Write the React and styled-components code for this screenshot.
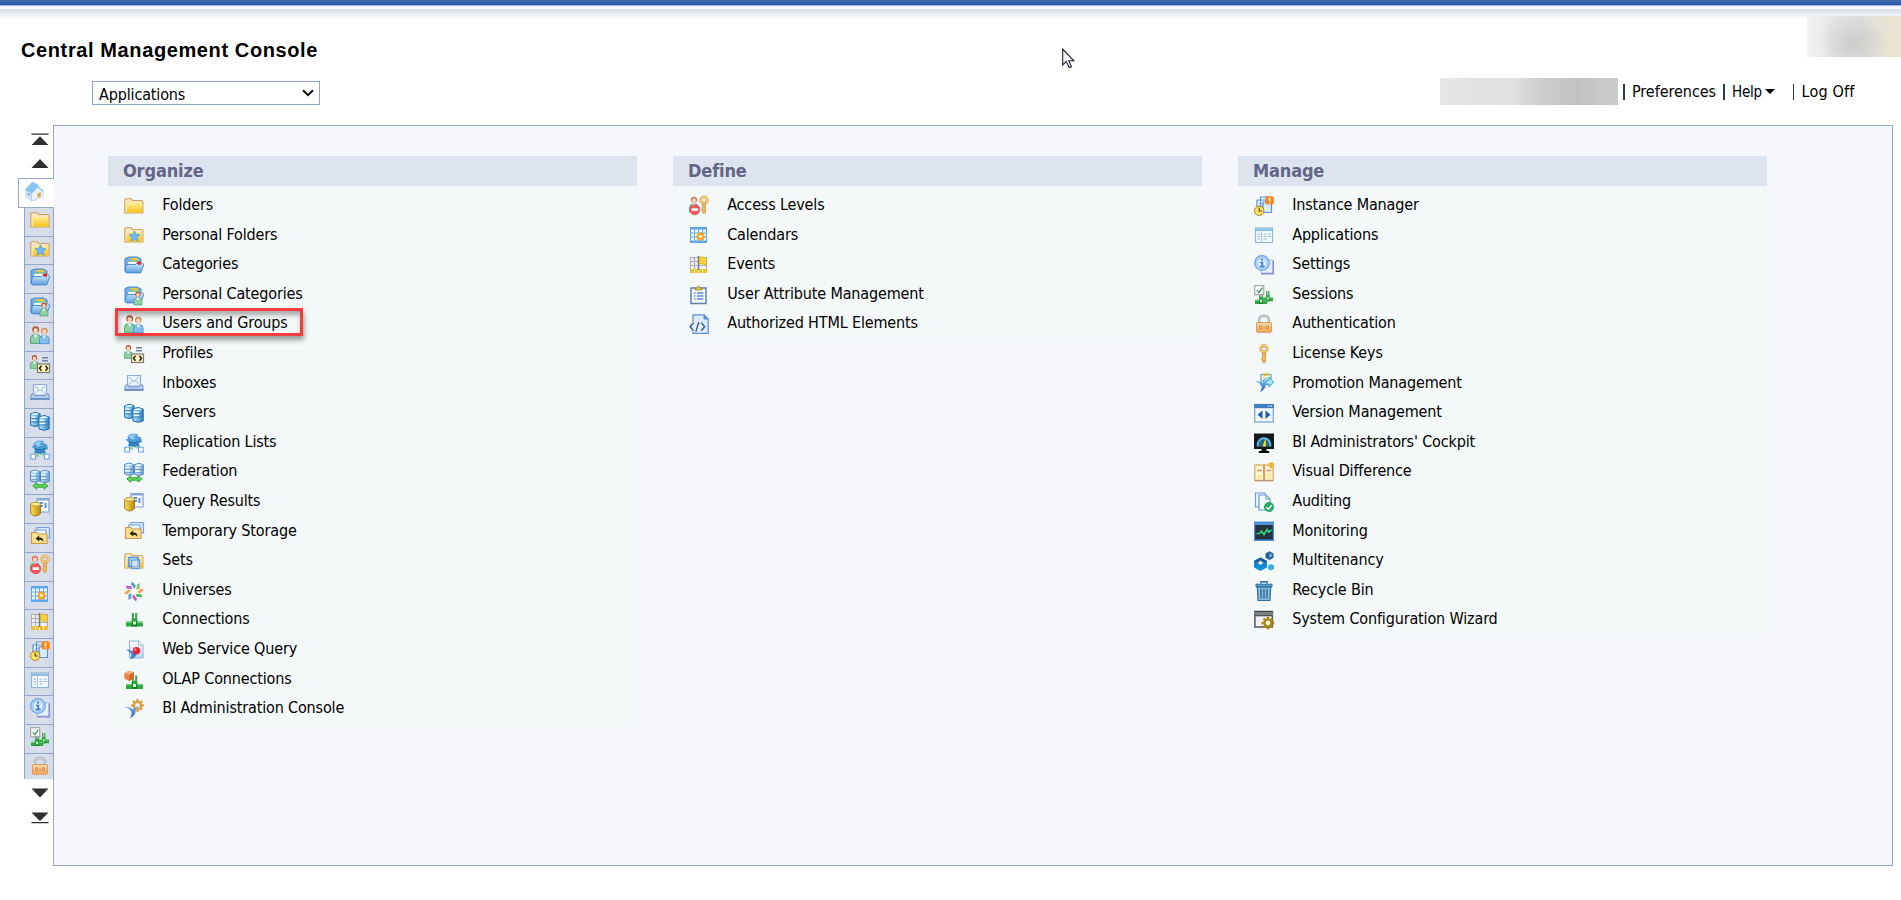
import React from 'react';
import styled, { createGlobalStyle } from 'styled-components';

const GlobalStyle = createGlobalStyle`
  * { box-sizing: border-box; }
  body { margin: 0; background: #fff; overflow: hidden; }
`;

const UI_FONT = '"DejaVu Sans Condensed", "DejaVu Sans", Tahoma, sans-serif';

/* ---------- icons ---------- */

const SharedDefs = styled.svg`
  position: absolute;
  width: 0;
  height: 0;
`;

const Grad = ({ id, from, to, flat }) => (
  <linearGradient id={id} x1="0" y1="0" x2={flat ? 1 : 0} y2={flat ? 0 : 1}>
    <stop offset="0" stopColor={from} />
    <stop offset="1" stopColor={to} />
  </linearGradient>
);

const Gradients = () => (
  <SharedDefs aria-hidden="true">
    <defs>
      <Grad id="gYellow" from="#ffed92" to="#f7c21a" />
      <Grad id="gBlue" from="#d3eafc" to="#5a9fe0" />
      <Grad id="gServer" from="#b5e2f8" to="#3289c6" flat />
      <Grad id="gServerPale" from="#cfe8fa" to="#74a9da" flat />
      <Grad id="gGold" from="#ffe05a" to="#b98a10" flat />
      <Grad id="gPage" from="#ffffff" to="#bcd7f6" />
      <Grad id="gLock" from="#ffdfae" to="#f2a55a" />
      <Grad id="gSwoosh" from="#7dbcf3" to="#1a57cc" />
      <Grad id="gHex" from="#1b6fb4" to="#0a9be0" />
    </defs>
  </SharedDefs>
);

const Bust = ({ x = 0, y = 0, s = 1, body = '#8fd0a4', edge = '#4aa56c', hair = '#b4563a' }) => (
  <g transform={`translate(${x} ${y}) scale(${s})`}>
    <path d="M.5 17v-4.5Q.5 9 4 8.6h2.6Q10.300 9 10.300 12.500V17z" fill={body} stroke={edge} strokeWidth=".9" />
    <path d="M3.600 8.600L5.300 12l1.800-3.400z" fill="#fff" />
    <circle cx="5.400" cy="4" r="3.300" fill={hair} />
    <ellipse cx="5.400" cy="4.900" rx="2.100" ry="2.500" fill="#fbd8bd" />
  </g>
);

const Cylinder = ({ x = 0, y = 0, w = 9, h = 14, fill = 'url(#gServer)', edge = '#1f6ca8' }) => (
  <g transform={`translate(${x} ${y})`} stroke={edge} strokeWidth="1">
    <path d={`M0 2V${h - 1.500}Q${w / 2} ${h + 1} ${w} ${h - 1.500}V2Q${w / 2}-1 0 2z`} fill={fill} />
    <path d={`M.8 2.200Q${w / 2} 4.200 ${w - 0.8} 2.200Q${w / 2}.2.8 2.200z`} fill="#dff3fd" stroke="none" />
    <path d={`M.5 5.300h${w * 0.55}M.5 8.500h${w * 0.55}`} fill="none" stroke="#f2fbff" strokeWidth="1.300" />
    <path d={`M.5 6.700h${w - 1}M.5 9.900h${w - 1}`} fill="none" strokeWidth=".7" />
  </g>
);

const FolderShape = () => (
  <>
    <path d="M.8 17V4l1-1.200h5.600l1.400 1.700h9.300l.8.9V17z" fill="#f8e6bf" stroke="#cf9f5c" strokeWidth="1.100" />
    <rect x="3" y="7" width="15.300" height="9.600" fill="url(#gYellow)" />
  </>
);

const Cog = ({ cx, cy, r, color, hole = '#f5f8f9' }) => (
  <g transform={`translate(${cx} ${cy})`}>
    {[0, 45, 90, 135].map((a) => (
      <rect key={a} x={-r * 0.2} y={-r} width={r * 0.4} height={r * 2} fill={color} transform={`rotate(${a})`} />
    ))}
    <circle r={r * 0.7} fill={color} />
    <circle r={r * 0.38} fill={hole} />
  </g>
);

const Swoosh = () => (
  <path d="M.5 7.500q6 .5 8.500 3.300Q10.500 7.500 15 6.800q-3.200 2.500-3.500 6-.4 4-5.500 6.400 3-5.200.6-7.700Q4.500 9 .5 7.500z" fill="url(#gSwoosh)" />
);

const GreenPlug = ({ x = 0, y = 0, s = 1 }) => (
  <g transform={`translate(${x} ${y}) scale(${s})`}>
    <path d="M6.800 0v7M10.200 0v7" stroke="#37a34a" strokeWidth="2" />
    <path d="M0 8.500h5.200l1-3.200h4.600l1 3.200H17v5H0z" fill="#2fa83f" />
    <path d="M0 9.300h17" stroke="#8fe08f" strokeWidth=".9" />
    <path d="M6 8.500h5l.6 5H5.400z" fill="#1c7f2e" />
    <rect x="7" y="8.500" width="3" height="3" fill="#d7f5d5" />
  </g>
);

const CategoryShape = () => (
  <>
    <path d="M1 16V3.500L5 2h8l4 2v3z" fill="#6fb0e6" stroke="#4a86c6" />
    <path d="M4 3.800l8-1 3 1.800-2 1.600z" fill="#f5c93a" />
    <path d="M6 5.600l8-.4 3 2H5z" fill="#7fc77e" />
    <path d="M4 7l12-.6.600 4H4z" fill="#f4f9ff" />
    <path d="M1 16.800L2.500 9.500h9l1.500-1.600h5.500l1.200 2-3 8H3z" fill="url(#gBlue)" stroke="#3f85cf" strokeWidth=".9" />
  </>
);

const Key = ({ x = 0, y = 0 }) => (
  <g transform={`translate(${x} ${y})`}>
    <path d="M3.500 7h3v11l-1.500 1.300L3.500 18v-2l-1.500-1 1.500-1.300z" fill="#eeb85c" stroke="#c88a34" strokeWidth=".7" />
    <circle cx="5" cy="4.800" r="3.300" fill="none" stroke="#d89a40" strokeWidth="2.800" />
    <circle cx="5" cy="4.600" r="3.300" fill="none" stroke="#f9d389" strokeWidth="1.400" />
  </g>
);

const GLYPHS = {
  home: (
    <>
      <path d="M1 9l6 3v8l-6-4.500z" fill="#d3e6f8" stroke="#9dc1e6" strokeWidth=".7" />
      <path d="M6.500 12l6-6 5.500 4v6L8.500 19.800l-2-1z" fill="#e9f3fe" stroke="#a3c5ea" strokeWidth=".7" />
      <path d="M.5 8.500L7.500 1 13.500 4.500 7 12z" fill="#8ac4f5" stroke="#7bb5ec" strokeWidth=".7" />
      <path d="M12.500 4.500l6 5-.5 1.500-6-5z" fill="#9cc8f2" />
      <path d="M12.500 12.500l3.300-1.600v4.500l-3.300 1.600z" fill="#e3a454" />
      <rect x="2.500" y="12" width="2.500" height="2.500" fill="#8fbde8" />
    </>
  ),
  folder: <FolderShape />,
  personalFolder: (
    <>
      <FolderShape />
      <path d="M10.500 5.800l1.700 3.500 3.800.5-2.800 2.600.7 3.800-3.400-1.900-3.400 1.900.7-3.800L5 9.800l3.800-.5z" fill="#6cbcf5" stroke="#4a9ade" strokeWidth=".7" />
    </>
  ),
  category: (
    <>
      <CategoryShape />
      <path d="M12.500 6.500h4.500v3.200h-3z" fill="#e0262b" />
    </>
  ),
  personalCategory: (
    <>
      <CategoryShape />
      <Bust x={9.500} y={6} s={0.82} />
    </>
  ),
  users: (
    <>
      <Bust x={0} y={0.500} s={1.050} />
      <Bust x={9} y={2} s={0.980} body="#86bdf0" edge="#4a90d8" hair="#d98a50" />
    </>
  ),
  profile: (
    <>
      <Bust x={0} y={0.500} s={0.820} />
      <path d="M12 3.800h6M12 6.800h6" stroke="#6f7fae" strokeWidth="1.500" />
      <rect x="7.500" y="10" width="12" height="8.500" fill="#fff3b8" stroke="#7b7b72" strokeWidth="1.200" />
      <path d="M11.500 11.800l-2 2.500 2 2.500M15.500 11.800l2 2.500-2 2.500" fill="none" stroke="#222" strokeWidth="1.500" />
    </>
  ),
  inbox: (
    <>
      <path d="M3.500 2.500h13v10.500h-13z" fill="#eef5fd" stroke="#8aaede" strokeWidth="1.200" />
      <path d="M5 4l5 4.500L15 4M5 11.500L8.500 8M15 11.500L11.500 8" fill="none" stroke="#8fb2e0" strokeWidth="1" />
      <path d="M.6 17.500L1.500 12h2.300l1 1.800h10.400l1-1.800h2.300l.9 5.500z" fill="#b6d1f2" stroke="#7493c8" strokeWidth="1" />
      <path d="M1 16.500h18" stroke="#6f90c8" strokeWidth="1.200" />
    </>
  ),
  servers: (
    <>
      <Cylinder x={0.600} y={0.800} w={9.500} h={15} />
      <Cylinder x={9} y={4} w={10.200} h={15.500} />
    </>
  ),
  replication: (
    <>
      <path d="M1.500 6.500L4 5.500 3.500 3 8 .5l6 .5-1 2 4 1.500 1 4.500-3 1 1 4-5 .5-3-1.500-3 1-1-2 1-2.500z" fill="#4b9bd5" />
      <path d="M4 3.500L8.500 1l4 1-3.500 2.500 5 .5-6 1.500z" fill="#8fcaf0" />
      <path d="M5 9q6 2.500 11-1M6 12q4 1.500 8-.5" stroke="#1f6fb2" strokeWidth="1.400" fill="none" />
      <path d="M5.500 16.500l2.500-4 1.500 4zM11 12.500l1.500 3.500 2-3" fill="#7ccf86" />
      <path d="M.8 14.200h4.800v4.800H.8zM14.400 14.200h4.800v4.800h-4.800z" fill="#fff" stroke="#69a4e8" strokeWidth="1.100" />
    </>
  ),
  federation: (
    <>
      <Cylinder x={0.600} y={0.500} w={9} h={13} fill="url(#gServerPale)" edge="#4f8ac2" />
      <Cylinder x={10.500} y={0.800} w={8.800} h={13} fill="url(#gServerPale)" edge="#4f8ac2" />
      <path d="M2.800 17l4-3.300v2H14v-2l4 3.300-4 3.200v-2H6.800v2z" fill="#67d65f" stroke="#24a12e" strokeWidth=".9" />
    </>
  ),
  query: (
    <>
      <path d="M7 1.500h12v13.500H7z" fill="#f6faff" stroke="#7d9fd4" strokeWidth="1.200" />
      <path d="M7 2.500h12" stroke="#86a9dc" strokeWidth="2" />
      <path d="M10 6h3M10 9h3M15.500 6v5" stroke="#5d8fd8" strokeWidth="2" />
      <path d="M.7 7.500v9Q5.500 21.500 10.500 16.500v-9z" fill="url(#gGold)" stroke="#9c7410" strokeWidth=".9" />
      <ellipse cx="5.600" cy="7.300" rx="4.900" ry="2" fill="#fbe88a" stroke="#b08618" strokeWidth=".8" />
    </>
  ),
  temporary: (
    <>
      <path d="M7 1.500h11.500l1 1V12H7z" fill="#dbeafc" stroke="#6fa0e0" strokeWidth="1.200" />
      <path d="M5 4h11v6H5z" fill="#f2f8ff" stroke="#6fa0e0" strokeWidth="1.200" />
      <path d="M1.500 17.500V6.500h5.500l1 1.500h9v9.500z" fill="#fae08a" stroke="#c9994e" strokeWidth="1.100" />
      <path d="M5.500 12.500l3.700-3v2q4.500 0 4.300 4.300-1-2-4.300-2v1.800z" fill="#2e2612" />
    </>
  ),
  sets: (
    <>
      <FolderShape />
      <rect x="5" y="6.500" width="9" height="9" fill="#dcebff" fillOpacity=".7" stroke="#3f8df0" strokeWidth="1.500" />
      <rect x="7.500" y="9" width="8" height="8.500" fill="#cfe4ff" fillOpacity=".6" stroke="#5a9df2" strokeWidth="1.300" />
    </>
  ),
  universe: (
    <g transform="translate(10 10.500)">
      {['#4f9fd8', '#8fbf5a', '#f5a54a', '#4fb85a', '#c759c2', '#5e9fd4', '#f2a83c', '#c45fc6'].map((c, i) => (
        <path key={i} d="M.8-2.800L-3-7-2-10 1.800-6z" fill={c} transform={`rotate(${i * 45})`} />
      ))}
    </g>
  ),
  connection: <GreenPlug x={2} y={3} />,
  webQuery: (
    <>
      <path d="M5.500 1h9L19 5v13H5.500z" fill="url(#gPage)" stroke="#94aed4" />
      <path d="M14.500 1v4H19" fill="#fff" stroke="#94aed4" />
      <path d="M2 9.500q5 0 7 2.500 3 0 4 1-1 5-7 6.500 2.500-4 1-6.500-2-2-5-3.500z" fill="#3b7fda" />
      <circle cx="12.500" cy="10.800" r="3.800" fill="#e0283a" />
      <circle cx="11.300" cy="9.600" r="1.100" fill="#ff9aa0" />
    </>
  ),
  olap: (
    <>
      <GreenPlug x={2} y={5.500} />
      <path d="M.3 3.200L5 .7l5 1.500v6L5.200 11 .3 8.500z" fill="#ec8446" />
      <path d="M.3 3.200L5 .7l5 1.500L5.200 4.800z" fill="#f9b37e" />
      <path d="M5.200 4.800L10 2.200v6L5.200 11z" fill="#d8662a" />
    </>
  ),
  biAdmin: (
    <>
      <Cog cx={13.500} cy={6.500} r={6.300} color="#dd9a38" />
      <Swoosh />
    </>
  ),
  access: (
    <>
      <Bust x={0} y={0} s={0.930} hair="#e06a50" />
      <g transform="translate(10 -.5) scale(1 .95)"><Key /></g>
      <circle cx="5.800" cy="13.800" r="5" fill="#f0585c" stroke="#dc4448" strokeWidth=".7" />
      <rect x="2.600" y="12.300" width="6.500" height="2.600" fill="#fff" />
    </>
  ),
  calendar: (
    <>
      <rect x="1.500" y="2.500" width="16" height="15" fill="#eaf5ff" stroke="#58a3ea" />
      <path d="M1.500 3.500h16M1.500 16.500h16" stroke="#5aa8f0" strokeWidth="2" />
      <path d="M1 8h17M1 12h17M5.500 3v15M9.500 3v15M13.500 3v15" stroke="#69aeee" strokeWidth="1" />
      <Cog cx={11.500} cy={11.500} r={4.500} color="#f6a01c" hole="#fff0b0" />
    </>
  ),
  events: (
    <>
      <rect x="1.500" y="2.500" width="16" height="15" fill="#f0f1f3" stroke="#a9adb5" />
      <path d="M1 6.500h17M1 10.500h17M5.500 2v12" stroke="#a9adb5" strokeWidth="1.200" />
      <rect x="1.500" y="14" width="16.500" height="4" fill="#f3c02c" />
      <path d="M5.500 14v4M9.500 14v4M13.500 14v4" stroke="#fff4c4" strokeWidth="1" />
      <path d="M9.500 1v14" stroke="#7b7f87" strokeWidth="1.600" />
      <path d="M10.500 2q4-1 7 1.500v7q-3.500-2.500-7-1.500z" fill="#f8cf3c" stroke="#d8aa2a" strokeWidth=".7" />
    </>
  ),
  attribute: (
    <>
      <rect x="2" y="3" width="15" height="15.500" fill="#f4f8fe" stroke="#6080b8" strokeWidth="1.500" />
      <path d="M5 8h1.500M5 11h1.500M5 14h1.500M8 8h6.500M8 11h6.500M8 14h6.500" stroke="#5c87d2" strokeWidth="1.400" />
      <path d="M6 5h7V3.500l-2-.5Q9.500-.8 8 3l-2 .500z" fill="#e9c53c" stroke="#9b8431" strokeWidth=".8" />
    </>
  ),
  html: (
    <>
      <path d="M4 .8h11l4.200 4.200v14.300H4z" fill="#dcecfb" stroke="#5b8fd0" strokeWidth="1.200" />
      <path d="M15 .8V5h4.200" fill="#5b8fd0" stroke="#5b8fd0" />
      <path d="M0 8h14v9.500H0z" fill="#e9f2fb" />
      <path d="M4.500 8.800L1.200 12.800l3.300 4M12.300 8.800l3.300 4-3.300 4M9.800 8l-3 9.800" fill="none" stroke="#3a5f94" strokeWidth="1.500" />
    </>
  ),
  instance: (
    <>
      <path d="M6.500 1h9v12h-9zM3 4h9v12H3z" fill="#edf5ff" stroke="#5c92dc" strokeWidth="1.200" />
      <path d="M9 6h8.500v10.500H9z" fill="#d9eaff" stroke="#5c92dc" strokeWidth="1.200" />
      <path d="M5 7.500h5M5 10h5" stroke="#7fabe6" />
      <circle cx="5.200" cy="14.800" r="4.700" fill="#ffdf66" stroke="#a9861e" />
      <path d="M5.200 11.800v3.200h2.800" fill="none" stroke="#5a4a1a" strokeWidth="1.200" />
      <rect x="11.500" y=".3" width="8.300" height="8.300" rx="2" fill="#ff8410" />
      <path d="M15.600 1.600v3.600M15.600 6.200v1.400" stroke="#fff" strokeWidth="1.600" />
    </>
  ),
  applications: (
    <>
      <rect x="1.500" y="3" width="17" height="14.500" fill="#f4fafe" stroke="#8fb6d4" strokeWidth="1.200" />
      <path d="M2 4.800h16" stroke="#8fc0e2" strokeWidth="2.600" />
      <path d="M7.500 6.500v11" stroke="#9ec3dd" />
      <path d="M3.500 9h2.600M3.500 11.500h2.600M3.500 14h2.600M9.500 9h3M13.800 9h3M9.500 11.500h3M13.800 11.500h3M9.500 14h3" stroke="#8fb9d6" strokeWidth="1.200" />
    </>
  ),
  settings: (
    <>
      <path d="M7 5h12v13H7z" fill="#e6effb" stroke="#b0bfdc" />
      <path d="M19.300 5.500v13.200H7" fill="none" stroke="#8e8fc4" strokeWidth="1.500" />
      <circle cx="8" cy="8" r="7.300" fill="#b9d8fa" stroke="#6ca6e8" strokeWidth="1.300" />
      <circle cx="8" cy="8" r="5" fill="#dcebfd" stroke="#8fbcf0" strokeWidth=".8" />
      <path d="M8 3.800v2M6 7.500h2.300v4M5.800 11.500h4.700" fill="none" stroke="#3a7bd0" strokeWidth="1.700" />
    </>
  ),
  sessions: (
    <>
      <g transform="translate(8.500 6) scale(.62 .75)"><GreenPlug /></g>
      <g transform="translate(1 7.500) scale(.72 .86)"><GreenPlug /></g>
      <rect x=".7" y=".7" width="9" height="9" fill="#fff" stroke="#a2a6a8" strokeWidth="1.200" />
      <path d="M2.800 5.300l2.200 2.400 3.200-5" fill="none" stroke="#3fa25a" strokeWidth="1.400" />
    </>
  ),
  auth: (
    <>
      <path d="M5 9.500V6.300Q5.300 2 10 1.800q4.700.2 5 4.500v3.200" fill="none" stroke="#a9adb2" strokeWidth="2.400" />
      <path d="M5 9.500V6.300Q5.300 2 10 1.800q4.700.2 5 4.500v3.200" fill="none" stroke="#e4e7ea" strokeWidth=".8" />
      <rect x="2.500" y="8.500" width="15" height="9.800" rx=".8" fill="url(#gLock)" stroke="#dc9a5c" />
      <path d="M5.500 11.800h2v3h-2zM12.500 11.800h2v3h-2zM10 11.500v3.800" fill="none" stroke="#d58c4a" strokeWidth="1" />
    </>
  ),
  license: <Key x={5} />,
  promotion: (
    <>
      <rect x="7" y="1.500" width="10" height="10" fill="#fdf6dc" stroke="#59a9c4" strokeWidth="1.200" />
      <rect x="9.800" y=".3" width="4.400" height="2.600" fill="#e3b33c" />
      <path d="M9 5h6" stroke="#8cc4b4" />
      <path d="M9 7h6V4l4.600 5-4.600 5v-3H9z" fill="#a6e9f2" stroke="#35a7c4" />
      <Swoosh />
    </>
  ),
  version: (
    <>
      <rect x=".7" y="1.500" width="18.600" height="17.500" fill="#f3f8fe" stroke="#7ca7d8" strokeWidth="1.300" />
      <rect x=".2" y="1" width="19.600" height="4.200" fill="#3f7ec2" />
      <path d="M14 3h1.500M16.500 3H18" stroke="#fff" strokeWidth="1.200" />
      <path d="M8.500 7.500v8.500l-5-4.200zM11.500 7.500v8.500l5-4.200z" fill="#1e5bb0" />
    </>
  ),
  cockpit: (
    <>
      <rect x="0" y=".5" width="20" height="15.500" fill="#15181c" />
      <rect x="7.500" y="16" width="5" height="2.500" fill="#111" />
      <rect x="4.800" y="18" width="10.400" height="2" fill="#000" />
      <path d="M4 13.500a6.300 6.300 0 1 1 12 0" fill="#2b6584" stroke="#54b9e6" strokeWidth="2" />
      <path d="M8.500 13.500L11.500 5l.5 8.500z" fill="#f1d53b" />
    </>
  ),
  difference: (
    <>
      <path d="M.8 3h9v15.500h-9zM10.500 3h8.700v15.500h-8.700z" fill="#fff5cf" stroke="#dfb573" strokeWidth="1.400" />
      <path d="M10 2.500v16.500M1 18.600h18" stroke="#b9967a" strokeWidth="1.300" />
      <path d="M3 8.500h5M12.500 8.500H17" stroke="#e58a7a" strokeWidth="1.500" />
      <path d="M3 13h5v4H3zM12.500 11H17v6h-4.500z" fill="#fbe8a8" />
      <path d="M15 .5h4.500V5L17 6.500 14.500 4z" fill="#f4b22a" />
    </>
  ),
  auditing: (
    <>
      <path d="M1.500 1h9.500v14H1.500z" fill="#e8f2fd" stroke="#6a9bd8" strokeWidth="1.100" />
      <path d="M5 3h7l4 4v11H5z" fill="#f4f9ff" stroke="#6a9bd8" strokeWidth="1.200" />
      <path d="M12 3v4h4" fill="none" stroke="#6a9bd8" strokeWidth="1.100" />
      <circle cx="15" cy="15" r="5" fill="#26a869" />
      <path d="M12.400 15.200l2 2 3.300-4" fill="none" stroke="#fff" strokeWidth="1.500" />
    </>
  ),
  monitoring: (
    <>
      <rect x="0" y=".5" width="20" height="19.500" fill="#4a90d9" />
      <rect x="1.200" y="4" width="17.600" height="14.500" fill="#26323d" />
      <path d="M2.500 12.500l3 0 2-2.500 2.500 3.500 3-5 1.800 2.500L17.500 9" fill="none" stroke="#2fd783" strokeWidth="1.600" />
    </>
  ),
  multitenancy: (
    <>
      <path d="M6.500 6.500l6.500 3.500v6.500L6.500 20 0 16.500V10z" fill="url(#gHex)" />
      <path d="M6.500 6.500l6.500 3.500-6.500 3.500L0 10z" fill="#1a5c96" />
      <path d="M6.500 9.500l3 2.500-3 2-3-2z" fill="#dff0fb" />
      <path d="M15.500.3l4 2.200v4.300l-4 2.200-4-2.200V2.500z" fill="#1e5f9c" />
      <path d="M15.500 2l2.300 1.500v2l-2.300 1.200z" fill="#7eb6dc" />
      <path d="M17 13l3 1.600v3.300l-3 1.700-3-1.700v-3.300z" fill="#3aaee6" />
    </>
  ),
  recycle: (
    <>
      <path d="M7 2.500V.8h6v1.700" fill="none" stroke="#2f6f9c" strokeWidth="1.500" />
      <path d="M2 3.200h16v2.800H2z" fill="#5b9cc6" stroke="#2f6f9c" />
      <path d="M3.300 6.200h13.400l-.7 13.300H4z" fill="#86b9dc" stroke="#2f6f9c" strokeWidth="1.200" />
      <path d="M7 8v9.800M10 8v9.800M13 8v9.800" stroke="#2f6f9c" strokeWidth="1.400" />
    </>
  ),
  wizard: (
    <>
      <rect x=".9" y="1.500" width="17.500" height="15.500" fill="#f0f2f3" stroke="#55585b" strokeWidth="1.500" />
      <rect x=".5" y="1" width="18.400" height="4.800" fill="#7c7f82" />
      <path d="M1 5.800h17.500M1 1.500h17.500" stroke="#3c3e40" strokeWidth="1.100" />
      <Cog cx={14} cy={13} r={6.300} color="#a8861a" hole="#f6efd0" />
    </>
  ),
};

const IconSvg = styled.svg`
  display: block;
  flex: none;
  width: 20px;
  height: 20px;
  overflow: visible;
`;

const Icon = ({ name }) => <IconSvg viewBox="0 0 20 20">{GLYPHS[name]}</IconSvg>;

/* ---------- page frame ---------- */

const Page = styled.div`
  position: relative;
  display: flex;
  flex-direction: column;
  width: 1901px;
  height: 900px;
  font: 16px/20px ${UI_FONT};
  letter-spacing: -0.15px;
  color: #000;
  background: #fff;
`;

const TopStripe = styled.div`
  flex: none;
  height: 20px;
  background: linear-gradient(
    #45699d 0 1px, #3a66a8 1px 2px, #2f5fb0 2px 4px, #2c56a3 4px 5px,
    #a9b6d8 5px 6px, #eef1fa 6px 7px, #fbfcff 7px 9px,
    #dcdfea 9px, #e2e5f0 12px, #f4f5fa 16px, #ffffff 20px
  );
`;

const Header = styled.header`
  display: flex;
  justify-content: space-between;
  height: 105px;
`;

const HeaderLeft = styled.div`
  display: flex;
  flex-direction: column;
  padding: 18px 0 0 21px;
`;

const Title = styled.h1`
  margin: 0;
  font: bold 20px/24px "Liberation Sans", Arial, sans-serif;
  letter-spacing: 0.61px;
`;

const ModuleSelect = styled.div`
  display: flex;
  align-items: center;
  justify-content: space-between;
  width: 228px;
  height: 24px;
  margin: 19px 0 0 71px;
  padding: 3px 5px 0 6px;
  border: 1px solid #8ea3c6;
`;

const Chevron = styled.svg`
  width: 12px;
  height: 8px;
  margin-top: -3px;
`;

const HeaderRight = styled.div`
  display: flex;
  flex-direction: column;
  align-items: flex-end;
`;

const LogoBlur = styled.div`
  width: 94px;
  height: 41px;
  margin-top: -4px;
  background:
    radial-gradient(ellipse 34px 30px at 50% 66%, rgba(200, 199, 198, 0.8), rgba(205, 204, 202, 0) 100%),
    linear-gradient(90deg, #f3f3f3 0, #e4e4e3 28%, #dfdfdd 55%, #e6e2d8 78%, #ece3cd 100%);
`;

const SessionBar = styled.nav`
  display: flex;
  align-items: center;
  height: 27px;
  margin: 21px 46px 0 0;
`;

const NameBlur = styled.div`
  width: 178px;
  height: 27px;
  margin-right: 5px;
  background: linear-gradient(90deg, #e7e7e7, #e0e0e1 22%, #e2e2e3 40%, #cfcdce 55%, #c3c2c2 78%, #cccccd 100%);
`;

const Divider = styled.span`
  width: 1.500px;
  height: 16px;
  background: #2a3b58;
`;

const SessionLink = styled.span`
  width: ${(p) => p.$width}px;
  padding-left: 7.500px;
  font-size: ${(p) => p.$size || 16}px;
  letter-spacing: ${(p) => p.$tracking || 0}px;
  white-space: nowrap;
`;

const Caret = styled.span`
  width: 0;
  height: 0;
  margin-right: 17.500px;
  border: 5px solid transparent;
  border-top: 5px solid #000;
  border-bottom: 0;
`;

/* ---------- body ---------- */

const Body = styled.div`
  display: flex;
`;

const SideRail = styled.aside`
  display: flex;
  flex-direction: column;
  align-items: flex-end;
  width: 53px;
  padding-top: 7.500px;
`;

const ScrollArrow = styled.svg`
  flex: none;
  width: 18px;
  height: 12px;
  margin: ${(p) => p.$margin};
  fill: #2f2f2f;
`;

const HomeTab = styled.div`
  position: relative;
  z-index: 1;
  width: 36px;
  height: 30px;
  margin-right: -1px;
  padding: 2px 0 0 6px;
  border: 1px solid #97a9c8;
  border-right: 0;
  background: #fff;
`;

const SideTab = styled.div`
  width: 29px;
  height: 28.740px;
  padding: 2px 0 0 5px;
  border-left: 1px solid #94a7c8;
  border-bottom: ${(p) => (p.$last ? 0 : 1)}px solid #94a7c8;
  background: linear-gradient(90deg, #d3dae8, #dadfeb 60%, #d2d9e8);
  ${(p) => p.$last && 'height: 25px;'}
`;

const Panel = styled.main`
  display: flex;
  gap: 36px;
  align-items: flex-start;
  width: 1840px;
  height: 741px;
  padding: 30px 0 0 54px;
  border: 1px solid #97a6c4;
  background: #f5f7fc;
`;

const Column = styled.section`
  width: 529px;
  padding-bottom: 5px;
  background: #f5f8f9;
`;

const ColumnTitle = styled.h2`
  height: 30px;
  margin: 0 0 3.200px;
  padding-left: 15px;
  font: bold 18px/30px ${UI_FONT};
  letter-spacing: -0.15px;
  color: #646489;
  background: #dde4ee;
`;

const Item = styled.div`
  position: relative;
  display: flex;
  align-items: center;
  gap: 18.500px;
  height: 29.620px;
  padding-left: 15.700px;
  white-space: nowrap;

  ${IconSvg} { margin-top: 3.600px; }
`;

const Label = styled.span`
  padding-top: 1.800px;
`;

const Highlight = styled.div`
  position: absolute;
  left: 7px;
  top: 0.300px;
  width: 188px;
  height: 28px;
  border: 3px solid #f73c3e;
  box-shadow: 1px 4px 5px rgba(0, 0, 0, 0.38), inset 1px 4px 5px rgba(0, 0, 0, 0.32);
`;

const Pointer = styled.svg`
  position: absolute;
  left: 1062px;
  top: 48px;
  width: 13px;
  height: 21px;
`;

/* ---------- data ---------- */

const SIDE_TABS = [
  'folder', 'personalFolder', 'category', 'personalCategory', 'users', 'profile', 'inbox', 'servers',
  'replication', 'federation', 'query', 'temporary', 'access', 'calendar', 'events', 'instance',
  'applications', 'settings', 'sessions', 'auth',
];

const COLUMNS = [
  {
    title: 'Organize',
    items: [
      ['folder', 'Folders'],
      ['personalFolder', 'Personal Folders'],
      ['category', 'Categories'],
      ['personalCategory', 'Personal Categories'],
      ['users', 'Users and Groups', true],
      ['profile', 'Profiles'],
      ['inbox', 'Inboxes'],
      ['servers', 'Servers'],
      ['replication', 'Replication Lists'],
      ['federation', 'Federation'],
      ['query', 'Query Results'],
      ['temporary', 'Temporary Storage'],
      ['sets', 'Sets'],
      ['universe', 'Universes'],
      ['connection', 'Connections'],
      ['webQuery', 'Web Service Query'],
      ['olap', 'OLAP Connections'],
      ['biAdmin', 'BI Administration Console'],
    ],
  },
  {
    title: 'Define',
    items: [
      ['access', 'Access Levels'],
      ['calendar', 'Calendars'],
      ['events', 'Events'],
      ['attribute', 'User Attribute Management'],
      ['html', 'Authorized HTML Elements'],
    ],
  },
  {
    title: 'Manage',
    items: [
      ['instance', 'Instance Manager'],
      ['applications', 'Applications'],
      ['settings', 'Settings'],
      ['sessions', 'Sessions'],
      ['auth', 'Authentication'],
      ['license', 'License Keys'],
      ['promotion', 'Promotion Management'],
      ['version', 'Version Management'],
      ['cockpit', "BI Administrators' Cockpit"],
      ['difference', 'Visual Difference'],
      ['auditing', 'Auditing'],
      ['monitoring', 'Monitoring'],
      ['multitenancy', 'Multitenancy'],
      ['recycle', 'Recycle Bin'],
      ['wizard', 'System Configuration Wizard'],
    ],
  },
];

export default function App() {
  return (
    <Page>
      <GlobalStyle />
      <Gradients />
      <TopStripe />
      <Header>
        <HeaderLeft>
          <Title>Central Management Console</Title>
          <ModuleSelect>
            Applications
            <Chevron viewBox="0 0 12 8">
              <path d="M1 1.200l5 5 5-5" fill="none" stroke="#111" strokeWidth="2" />
            </Chevron>
          </ModuleSelect>
        </HeaderLeft>
        <HeaderRight>
          <LogoBlur />
          <SessionBar>
            <NameBlur />
            <Divider />
            <SessionLink $width={98.500} $tracking={-0.050}>Preferences</SessionLink>
            <Divider />
            <SessionLink $width={40.500} $size={15} $tracking={-0.200}>Help</SessionLink>
            <Caret />
            <Divider />
            <SessionLink $width={61} $tracking={0.200}>Log Off</SessionLink>
          </SessionBar>
        </HeaderRight>
      </Header>
      <Body>
        <SideRail>
          <ScrollArrow $margin="0 4.500px 0 0" viewBox="0 0 18 12">
            <path d="M.5 .5h17v1.200H.5zM9 3.200l8.500 9H.5z" />
          </ScrollArrow>
          <ScrollArrow $margin="12.500px 4.500px 9px 0" viewBox="0 0 18 12">
            <path d="M9 2l8.500 9H.5z" />
          </ScrollArrow>
          <HomeTab><Icon name="home" /></HomeTab>
          {SIDE_TABS.map((name, i) => (
            <SideTab key={name} $last={i === SIDE_TABS.length - 1}><Icon name={name} /></SideTab>
          ))}
          <ScrollArrow $margin="9px 4.500px 0 0" viewBox="0 0 18 12">
            <path d="M.5 .5h17L9 9.500z" />
          </ScrollArrow>
          <ScrollArrow $margin="12px 4.500px 0 0" viewBox="0 0 18 12">
            <path d="M.5 .5h17L9 9zM.5 10h17v1.200H.5z" />
          </ScrollArrow>
        </SideRail>
        <Panel>
          {COLUMNS.map((col) => (
            <Column key={col.title}>
              <ColumnTitle>{col.title}</ColumnTitle>
              {col.items.map(([icon, label, marked]) => (
                <Item key={label}>
                  <Icon name={icon} />
                  <Label>{label}</Label>
                  {marked && <Highlight />}
                </Item>
              ))}
            </Column>
          ))}
        </Panel>
      </Body>
      <Pointer viewBox="0 0 13 21">
        <path d="M.7 1v16l3.600-3.400 2.900 6 2.300-1-2.700-5.800h5z" fill="#fff" stroke="#1c1c2c" strokeWidth="1.100" />
      </Pointer>
    </Page>
  );
}
